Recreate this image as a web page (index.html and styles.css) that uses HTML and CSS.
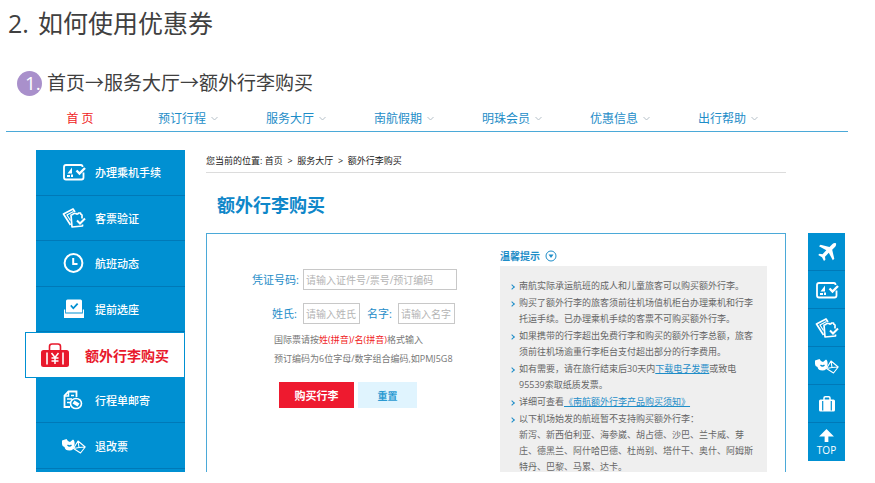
FILE: index.html
```html
<!DOCTYPE html>
<html lang="zh-CN">
<head>
<meta charset="utf-8">
<meta name="viewport" content="width=device-width, initial-scale=1">
<title>如何使用优惠券</title>
<link rel="stylesheet" href="styles.css">
</head>
<body>
<svg class="sprite" aria-hidden="true">
  <symbol id="i-pass" viewBox="0 0 24 20">
    <path d="M20.500 5V4.500Q20.500 3 19 3H4Q2 3 2 5V15.500Q2 17.500 4 17.500H19.500Q21.500 17.500 21.500 15.500V10.500" fill="none" stroke="currentColor" stroke-width="1.800"/>
    <path d="M5.500 11.500L10 5.500V11.500ZM5 13H8V15H5ZM9 12.500H11V15H9Z" fill="currentColor"/>
    <path d="M14.500 8.500L17.500 11.500L23 6" fill="none" stroke="currentColor" stroke-width="2.400"/>
  </symbol>
  <symbol id="i-ticket" viewBox="0 0 24 20">
    <path d="M8.500 17L1.500 6L11 1L13 4" fill="none" stroke="currentColor" stroke-width="1.700" stroke-linejoin="round"/>
    <path d="M8.500 12.500L5 7L11.500 3.500" fill="none" stroke="currentColor" stroke-width="1.200"/>
    <path d="M20 10.500V7Q18.500 6.500 18.500 5H16.500Q15.500 6.800 14 5.500H11.500Q11 7 9 7L10 19L20.500 18V16.500" fill="none" stroke="currentColor" stroke-width="1.700" stroke-linejoin="round"/>
    <path d="M15 12.500L18 15.500L23 10.500" fill="none" stroke="currentColor" stroke-width="2"/>
  </symbol>
  <symbol id="i-clock" viewBox="0 0 24 20">
    <circle cx="11.500" cy="10" r="8.900" fill="none" stroke="currentColor" stroke-width="2"/>
    <path d="M11.200 5V11H15.500" fill="none" stroke="currentColor" stroke-width="2"/>
  </symbol>
  <symbol id="i-seat" viewBox="0 0 24 20">
    <path fill-rule="evenodd" fill="currentColor" d="M5.500 .500H18.500Q20 .500 20 2V13.500H4V2Q4 .500 5.500 .500ZM8.200 7L11.300 10.500L16.300 5.200L15 4L11.300 8L9.400 5.800Z"/>
    <path fill="currentColor" d="M2 10.500H3.200V14.500H20.800V10.500H22V19H2Z"/>
  </symbol>
  <symbol id="i-case-yen" viewBox="0 0 28 24">
    <path d="M8.500 8V3.500Q8.500 1 11 1H17Q19.500 1 19.500 3.500V8" fill="none" stroke="currentColor" stroke-width="1.600"/>
    <rect y="7" width="28" height="17" rx="2.500" fill="currentColor"/>
    <path d="M6 9.500V21.500M22 9.500V21.500" stroke="#fff" stroke-width="1.600"/>
    <path d="M10.500 10L14 14.500L17.500 10M14 14.500V21M10.500 15H17.500M10.500 18H17.500" fill="none" stroke="#fff" stroke-width="1.500"/>
  </symbol>
  <symbol id="i-doc" viewBox="0 0 24 20">
    <path d="M8 17H2.500V5.500L6.500 1.500H14.500V7" fill="none" stroke="currentColor" stroke-width="1.800"/>
    <path d="M6.500 1V6H2M5 9H10M5 12.500H8M9 5.500H12" fill="none" stroke="currentColor" stroke-width="1.500"/>
    <ellipse cx="14" cy="13.500" rx="5.500" ry="5" fill="none" stroke="currentColor" stroke-width="1.600"/>
    <path d="M12.500 10.500L17.500 13.500L15.500 16.500L10.500 13.500Z" fill="currentColor"/>
  </symbol>
  <symbol id="i-refund" viewBox="0 0 24 20">
    <path fill="currentColor" d="M0 4.500L4.500 3Q6 6 8 6L11 3.500Q13 4.500 12.500 9Q12 14.500 7.500 14.500Q3 14.500 2.500 11Q0 10.500 0 8Z"/>
    <path d="M5.500 9Q7.500 11 9.500 9" fill="none" stroke="#0090d2" stroke-width="1.200"/>
    <path d="M16 5L23.200 11L18.500 17L11.500 12.500ZM16 5L17 11.500L23.200 11M17 11.500L11.500 12.500" fill="none" stroke="currentColor" stroke-width="1.100" stroke-linejoin="round"/>
  </symbol>
  <symbol id="i-plane" viewBox="0 0 24 20">
    <path fill="currentColor" d="M21 1.200Q19 .600 17.500 2L14.500 5L5.500 2.800L4 4.300L11.300 8.300L7.500 12.200L4.500 11.800L3.200 13L7 15.200L9 19L10.400 17.700L10 14.700L13.800 10.800L17.800 18.300L19.300 16.800L17.200 7.800L20.200 4.800Q21.500 3.200 21 1.200Z"/>
  </symbol>
  <symbol id="i-case" viewBox="0 0 24 20">
    <path d="M9 6V4Q9 2.800 10.200 2.800H13.800Q15 2.800 15 4V6" fill="none" stroke="currentColor" stroke-width="1.500"/>
    <rect x="4" y="5.500" width="16" height="12" rx="1.500" fill="currentColor"/>
    <path d="M7.700 7V16.500M16.300 7V16.500" stroke="#0090d2" stroke-width="1.200"/>
  </symbol>
  <symbol id="i-top" viewBox="0 0 16 14">
    <path d="M8 0L16 8H10V14H6V8H0Z" fill="currentColor"/>
  </symbol>
  <symbol id="i-down" viewBox="0 0 7 5">
    <path d="M.500 1L3.500 4L6.500 1" fill="none" stroke="currentColor"/>
  </symbol>
</svg>

<header class="guide">
  <h1><span>2.</span>如何使用优惠券</h1>
  <h2><span class="step">1.</span>首页→服务大厅→额外行李购买</h2>
</header>

<nav class="topnav" aria-label="主导航">
  <a class="current" href="#">首 页</a>
  <a href="#">预订行程<svg><use href="#i-down"/></svg></a>
  <a href="#">服务大厅<svg><use href="#i-down"/></svg></a>
  <a href="#">南航假期<svg><use href="#i-down"/></svg></a>
  <a href="#">明珠会员<svg><use href="#i-down"/></svg></a>
  <a href="#">优惠信息<svg><use href="#i-down"/></svg></a>
  <a href="#">出行帮助<svg><use href="#i-down"/></svg></a>
</nav>

<div class="site">
  <nav class="side" aria-label="服务大厅">
    <a href="#"><svg><use href="#i-pass"/></svg>办理乘机手续</a>
    <a href="#"><svg><use href="#i-ticket"/></svg>客票验证</a>
    <a href="#"><svg><use href="#i-clock"/></svg>航班动态</a>
    <a href="#"><svg><use href="#i-seat"/></svg>提前选座</a>
    <a class="active" href="#"><svg><use href="#i-case-yen"/></svg>额外行李购买</a>
    <a href="#"><svg><use href="#i-doc"/></svg>行程单邮寄</a>
    <a href="#"><svg><use href="#i-refund"/></svg>退改票</a>
  </nav>

  <main class="content">
    <p class="crumbs">您当前的位置: <a href="#">首页</a> &nbsp;&gt;&nbsp; <a href="#">服务大厅</a> &nbsp;&gt;&nbsp; 额外行李购买</p>
    <h3 class="title">额外行李购买</h3>
    <div class="panel">
      <form class="form">
        <div class="row">
          <label for="doc">凭证号码:</label>
          <input id="doc" class="wide" type="text" placeholder="请输入证件号/票号/预订编码">
        </div>
        <div class="row">
          <label for="last">姓氏:</label>
          <input id="last" type="text" placeholder="请输入姓氏">
          <label class="second" for="first">名字:</label>
          <input id="first" type="text" placeholder="请输入名字">
        </div>
        <p class="hint">国际票请按<em>姓(拼音)/名(拼音)</em>格式输入<br>预订编码为6位字母/数字组合编码,如PMJ5G8</p>
        <div class="actions">
          <button class="buy" type="submit">购买行李</button>
          <button class="reset" type="reset">重置</button>
        </div>
      </form>
      <section class="tips">
        <h4>温馨提示
          <svg viewBox="0 0 12 12"><circle cx="6" cy="6" r="5" fill="none" stroke="currentColor"/><path d="M3.500 4.500H8.500L6 8Z" fill="currentColor"/></svg>
        </h4>
        <ul>
          <li>南航实际承运航班的成人和儿童旅客可以购买额外行李。</li>
          <li>购买了额外行李的旅客须前往机场值机柜台办理乘机和行李托运手续。已办理乘机手续的客票不可购买额外行李。</li>
          <li>如果携带的行李超出免费行李和购买的额外行李总额，旅客须前往机场逾重行李柜台支付超出部分的行李费用。</li>
          <li>如有需要，请在旅行结束后30天内<a href="#">下载电子发票</a>或致电95539索取纸质发票。</li>
          <li>详细可查看<a href="#">《南航额外行李产品购买须知》</a></li>
          <li>以下机场始发的航班暂不支持购买额外行李：<br>新泻、新西伯利亚、海参崴、胡占德、沙巴、兰卡威、芽庄、德黑兰、阿什哈巴德、杜尚别、塔什干、奥什、阿姆斯特丹、巴黎、马累、达卡。</li>
        </ul>
      </section>
    </div>
  </main>

  <nav class="tools" aria-label="快捷入口">
    <a href="#" aria-label="机票"><svg><use href="#i-plane"/></svg></a>
    <a href="#" aria-label="办理乘机手续"><svg><use href="#i-pass"/></svg></a>
    <a href="#" aria-label="客票验证"><svg><use href="#i-ticket"/></svg></a>
    <a href="#" aria-label="退改票"><svg><use href="#i-refund"/></svg></a>
    <a href="#" aria-label="行李"><svg><use href="#i-case"/></svg></a>
    <a class="top" href="#"><svg><use href="#i-top"/></svg>TOP</a>
  </nav>
</div>
</body>
</html>
```
FILE: styles.css
```css
*,
*::before {
  box-sizing: border-box;
}

body {
  margin: 0;
  background: #fff;
  color: #404040;
  font-family: "Open Sans", "Noto Sans CJK SC", sans-serif;
}

h1, h2, h3, h4, p, ul {
  margin: 0;
  padding: 0;
}

a {
  color: inherit;
  text-decoration: none;
}

.sprite {
  display: none;
}

.guide {
  padding: 5px 8px 0;
}

.guide h1 {
  display: flex;
  gap: 9px;
  font-size: 25px;
  line-height: 36px;
  font-weight: 400;
}

.guide h2 {
  display: flex;
  align-items: center;
  gap: 5px;
  margin-top: 30px;
  padding-left: 9px;
  font-size: 19px;
  line-height: 25px;
  font-weight: 400;
}

.step {
  width: 25px;
  height: 25px;
  padding-left: 8px;
  border-radius: 50%;
  background: #a990cb;
  color: #fff;
}

/* Top navigation */

.topnav {
  display: flex;
  margin: 10px 27px 0 6px;
  padding: 0 66px 0 20px;
  border-bottom: 1px solid #4ba9d8;
  color: #1e8dc8;
  font-size: 12px;
  line-height: 25px;
}

.topnav a {
  flex: 1;
  display: flex;
  align-items: center;
  justify-content: center;
  gap: 5px;
}

.topnav .current {
  color: #f01c24;
}

.topnav svg {
  width: 7px;
  height: 5px;
  color: #b5c0c8;
}

/* Page body */

.site {
  display: flex;
  align-items: flex-start;
  max-height: 340px;
  padding: 18px 30px 0 36px;
  overflow: hidden;
}

.side {
  flex: 0 0 149px;
  display: grid;
  grid-auto-rows: 1fr;
  height: 322px;
  padding-bottom: 3px;
  background: #0090d2;
  color: #fff;
  font-size: 11px;
  font-weight: 500;
}

.side a {
  display: flex;
  align-items: center;
  gap: 9px;
  padding-left: 26px;
  border-bottom: 1px solid #0079b8;
}

.side svg,
.tools svg {
  width: 24px;
  height: 20px;
}

.side .active {
  gap: 16px;
  margin-left: -11px;
  padding-left: 15px;
  border: 1px solid #0090d2;
  background: #fff;
  color: #e8192c;
  font-size: 14px;
  font-weight: 700;
}

.side .active svg {
  width: 28px;
  height: 24px;
}

.content {
  flex: 1;
  margin: 0 22px 0 21px;
}

.crumbs {
  border-bottom: 1px solid #dcdcdc;
  color: #222;
  font-size: 9px;
  line-height: 22px;
}

.title {
  padding: 18px 11px 14px;
  color: #0f87c9;
  font-size: 18px;
  line-height: 28px;
}

.panel {
  display: flex;
  justify-content: space-between;
  padding: 12px 18px 0 45px;
  border: 1px solid #4ba9d8;
}

/* Form */

.form {
  padding-top: 23px;
}

.row {
  display: flex;
  align-items: center;
  gap: 6px;
  margin-bottom: 13px;
}

.row label {
  width: 45px;
  color: #1e8dc8;
  font-size: 11px;
  line-height: 20px;
  text-align: right;
  white-space: nowrap;
}

.row .second {
  width: 26px;
}

.row input {
  width: 57px;
  height: 21px;
  padding: 0 2px;
  border: 1px solid #c8c8c8;
  border-radius: 0;
  background: #fff;
  font: inherit;
  font-size: 10px;
}

.row .wide {
  width: 154px;
}

.row input::placeholder {
  color: #b4b4b4;
  opacity: 1;
}

.hint {
  margin-top: -7px;
  padding-left: 22px;
  color: #777;
  font-size: 9px;
  line-height: 19px;
}

.hint em {
  color: #f01c24;
  font-style: normal;
}

.actions {
  display: flex;
  gap: 4px;
  margin-top: 14px;
  padding-left: 27px;
}

.actions button {
  height: 26px;
  padding: 0;
  border: 0;
  font: inherit;
  font-weight: 700;
}

.actions .buy {
  width: 75px;
  background: #ee1a2f;
  color: #fff;
  font-size: 11px;
}

.actions .reset {
  width: 59px;
  background: #e0f4fe;
  color: #2b9ad2;
  font-size: 10px;
}

/* Tips */

.tips {
  flex: 0 0 267px;
}

.tips h4 {
  display: flex;
  align-items: center;
  gap: 5px;
  color: #1e8dc8;
  font-size: 10px;
  line-height: 20px;
}

.tips h4 svg {
  width: 12px;
  height: 12px;
}

.tips ul {
  padding: 12px 10px 0 19px;
  background: #efefef;
  color: #666;
  font-size: 9px;
  line-height: 16px;
  list-style: none;
}

.tips li {
  position: relative;
  margin-bottom: 1px;
}

.tips li::before {
  content: "";
  position: absolute;
  top: 7px;
  left: -9px;
  width: 4px;
  height: 4px;
  border: solid #1e8dc8;
  border-width: 1px 1px 0 0;
  transform: rotate(45deg);
}

.tips a {
  color: #1e8dc8;
  text-decoration: underline;
}

/* Quick access bar */

.tools {
  flex: 0 0 37px;
  margin-top: 83px;
  background: #0090d2;
  color: #fff;
}

.tools a {
  display: flex;
  flex-direction: column;
  align-items: center;
  justify-content: center;
  height: 38px;
  border-bottom: 1px solid #0079b8;
}

.tools .top {
  gap: 2px;
  border-bottom: 0;
  font-size: 10px;
  line-height: 12px;
}

.tools .top svg {
  width: 15px;
  height: 13px;
}
```
